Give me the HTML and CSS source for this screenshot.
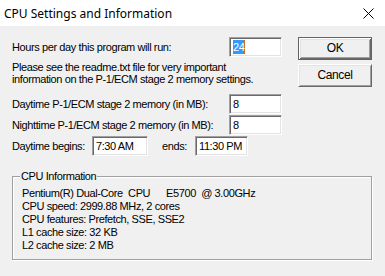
FILE: index.html
```html
<!DOCTYPE html>
<html>
<head>
<meta charset="utf-8">
<link rel="stylesheet" href="styles.css">
</head>
<body>
<div class="titlebar">
  <span class="title">CPU Settings and Information</span>
  <svg class="close" width="11" height="11" viewBox="0 0 11 11"><path d="M0.5 0.5 L10.5 10.5 M10.5 0.5 L0.5 10.5" stroke="#000" stroke-width="1" fill="none"/></svg>
</div>
<div class="client">
  <div class="top">
    <div class="form">
      <div class="row spread">
        <span>Hours per day this program will run:</span>
        <div class="field"><span class="sel">24</span></div>
      </div>
      <p class="note">Please see the readme.txt file for very important<br>information on the P-1/ECM stage 2 memory settings.</p>
      <div class="rows">
        <div class="row spread">
          <span>Daytime P-1/ECM stage 2 memory (in MB):</span>
          <div class="field">8</div>
        </div>
        <div class="row spread">
          <span>Nighttime P-1/ECM stage 2 memory (in MB):</span>
          <div class="field">8</div>
        </div>
        <div class="row">
          <span class="lbl-begin">Daytime begins:</span>
          <div class="field time">7:30 AM</div>
          <span class="lbl-end">ends:</span>
          <div class="field">11:30 PM</div>
        </div>
      </div>
    </div>
    <div class="buttons">
      <div class="btn default">OK</div>
      <div class="btn">Cancel</div>
    </div>
  </div>
  <fieldset class="group">
    <legend>CPU Information</legend>
    <div class="info">Pentium(R) Dual-Core  CPU      E5700  @ 3.00GHz
CPU speed: 2999.88 MHz, 2 cores
CPU features: Prefetch, SSE, SSE2
L1 cache size: 32 KB
L2 cache size: 2 MB</div>
  </fieldset>
</div>
</body>
</html>
```

FILE: styles.css
```css
html, body {
  margin: 0;
  padding: 0;
}
body {
  width: 385px;
  height: 276px;
  overflow: hidden;
  background: #f0f0f0;
  color: #000;
  font-family: "Liberation Sans", Arial, sans-serif;
  font-size: 11px;
  letter-spacing: -0.4px;
  line-height: 13px;
}
.titlebar {
  height: 26px;
  background: #fff;
  display: flex;
  align-items: center;
  justify-content: space-between;
  padding: 0 11px 0 4px;
  box-sizing: border-box;
}
.title {
  font-family: "Noto Sans", sans-serif;
  font-size: 12px;
  letter-spacing: 0;
  line-height: 16px;
  margin-top: 1px;
}
.close {
  display: block;
  margin-top: 1px;
}
.client {
  padding: 11px 13px 0 12px;
}
.top {
  display: flex;
}
.form {
  width: 270px;
}
.row {
  display: flex;
  align-items: center;
  height: 20px;
  white-space: nowrap;
}
.spread {
  justify-content: space-between;
}
.field {
  width: 53px;
  height: 20px;
  box-sizing: border-box;
  background: #fff;
  border: 1px solid;
  border-color: #a0a0a0 #fff #fff #a0a0a0;
  box-shadow: inset 1px 1px 0 #696969, inset -1px -1px 0 #e3e3e3;
  padding: 2px 2px 0 3px;
  line-height: 14px;
  white-space: nowrap;
}
.sel {
  display: inline-block;
  background: #3399ff;
  color: #fff;
  border-right: 1px solid #d06a1c;
}
.note {
  margin: 4px 0 0;
  line-height: 12px;
}
.rows {
  margin-top: 9px;
  display: flex;
  flex-direction: column;
  gap: 1px;
}
.lbl-begin {
  width: 80px;
}
.time {
  width: 56px;
}
.lbl-end {
  margin-left: 14px;
  width: 33px;
}
.buttons {
  margin-left: 16px;
  display: flex;
  flex-direction: column;
  gap: 4px;
}
.btn {
  width: 74px;
  height: 23px;
  box-sizing: border-box;
  display: flex;
  align-items: center;
  justify-content: center;
  background: #f0f0f0;
  border: 1px solid;
  border-color: #fff #696969 #696969 #fff;
  box-shadow: inset 1px 1px 0 #e3e3e3, inset -1px -1px 0 #a0a0a0;
  font-size: 12px;
}
.btn.default {
  border-color: #646464;
  box-shadow: inset 1px 1px 0 #fff, inset -1px -1px 0 #696969, inset 2px 2px 0 #e3e3e3, inset -2px -2px 0 #a0a0a0;
}
.group {
  margin: 14px 0 0;
  padding: 4px 9px 7px;
  border: 1px solid #a0a0a0;
  box-shadow: inset 1px 1px 0 #fff, 1px 1px 0 #fff;
  min-width: 0;
}
.group legend {
  margin-left: -2px;
  padding: 0 1px;
  background: #f0f0f0;
  line-height: 13px;
}
.info {
  white-space: pre;
  line-height: 13px;
}
```
